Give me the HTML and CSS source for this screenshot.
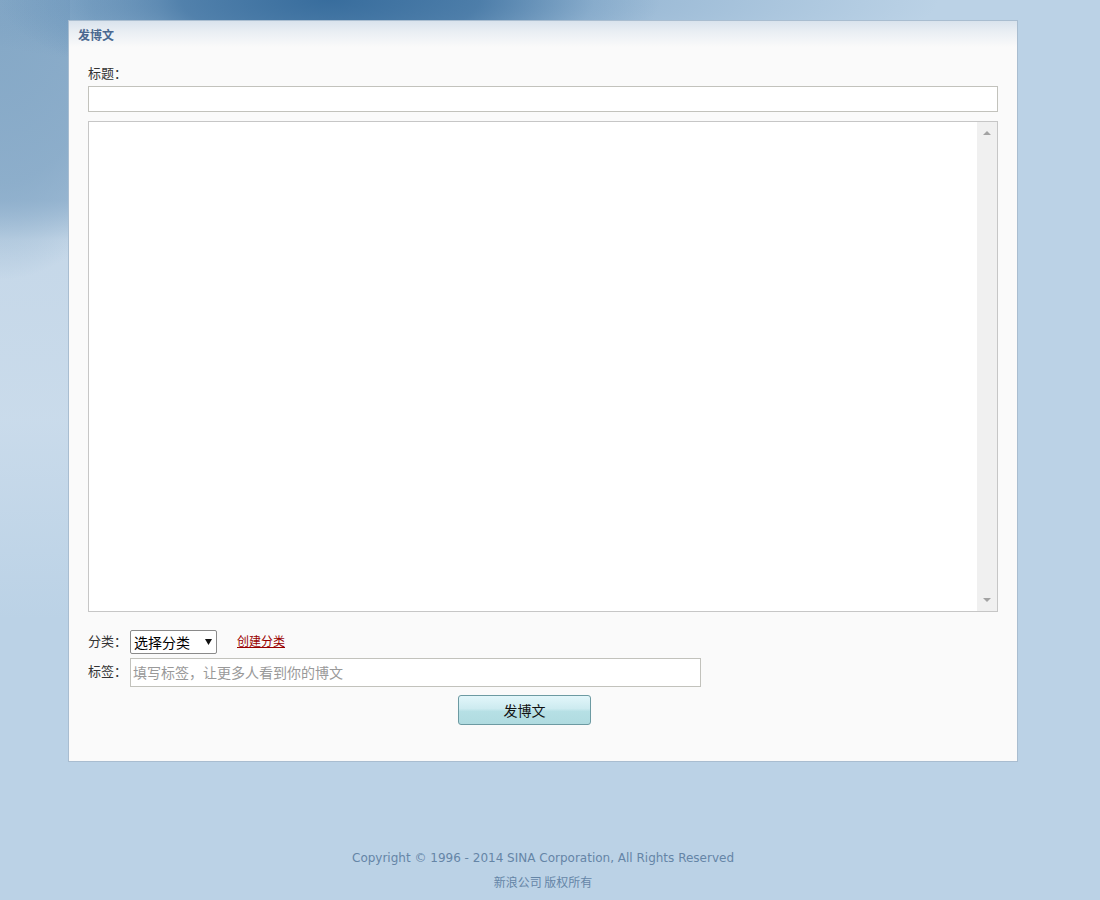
FILE: index.html
```html
<!DOCTYPE html>
<html lang="zh-CN">
<head>
<meta charset="utf-8">
<title>发博文</title>
<link rel="stylesheet" href="styles.css">
</head>
<body>
<div class="page">
  <div class="panel">
    <div class="panel-head">发博文</div>
    <div class="panel-body">
      <div class="label">标题：</div>
      <input class="title-input" type="text">
      <div class="editor">
        <textarea class="editor-area"></textarea>
        <div class="scrollbar">
          <span class="arrow up"></span>
          <span class="arrow down"></span>
        </div>
      </div>
      <div class="row cat-row">
        <span class="row-label">分类：</span>
        <select class="cat-select"><option>选择分类</option></select>
        <a class="create-link" href="#">创建分类</a>
      </div>
      <div class="row tag-row">
        <span class="row-label">标签：</span>
        <input class="tag-input" type="text" placeholder="填写标签，让更多人看到你的博文">
      </div>
      <div class="actions">
        <button class="submit-btn" type="button">发博文</button>
      </div>
    </div>
  </div>
  <div class="footer">
    <div class="copy">Copyright © 1996 - 2014 SINA Corporation, All Rights Reserved</div>
    <div class="copy-cn">新浪公司 版权所有</div>
  </div>
</div>
</body>
</html>
```

FILE: styles.css
```css
html, body {
  margin: 0;
  padding: 0;
  height: 100%;
}

body {
  font-family: "Liberation Sans", "Noto Sans CJK SC", sans-serif;
  color: #333;
  background-color: #bbd2e6;
  background-image:
    radial-gradient(ellipse 330px 95px at 330px 0, #386d9d 0%, rgba(56,109,157,0.75) 45%, rgba(90,138,180,0.25) 80%, rgba(187,210,230,0) 100%),
    radial-gradient(ellipse 520px 80px at 420px 0, rgba(80,130,175,0.5) 0%, rgba(187,210,230,0) 100%),
    radial-gradient(ellipse 160px 240px at 0 40px, #86a9c7 0%, rgba(134,169,199,0.7) 60%, rgba(187,210,230,0) 100%),
    linear-gradient(to bottom, rgba(140,172,202,0.9) 0px, rgba(140,172,202,0.6) 200px, rgba(200,217,233,0.8) 240px, rgba(205,221,236,0.8) 420px, rgba(187,210,230,0) 620px);
  background-repeat: no-repeat;
  background-size: auto, auto, auto, 70px 900px;
}

.page {
  padding-top: 20px;
}

.panel {
  margin-left: 68px;
  width: 950px;
  box-sizing: border-box;
  border: 1px solid #a9bdd0;
  background: #fafafa;
  box-shadow: inset 0 1px 0 #fff;
}

.panel-head {
  height: 26px;
  line-height: 28px;
  padding-left: 9px;
  font-size: 12px;
  font-weight: bold;
  color: #4a6890;
  font-family: "Noto Sans CJK SC", sans-serif;
  background: linear-gradient(to bottom, #d9e3ed 0%, #e9eef3 40%, #fafafa 100%);
}

.panel-body {
  padding: 16px 19px 36px 19px;
}

.label {
  font-family: "Noto Sans CJK SC", sans-serif;
  font-size: 13px;
  line-height: 20px;
  color: #333;
  margin-bottom: 3px;
}

.title-input {
  display: block;
  box-sizing: border-box;
  width: 910px;
  height: 26px;
  margin: 0;
  border: 1px solid #c2c2bc;
  background: #fff;
  outline: none;
}

.editor {
  display: flex;
  box-sizing: border-box;
  width: 910px;
  height: 491px;
  margin-top: 9px;
  border: 1px solid #c6c6c6;
  background: #fff;
}

.editor-area {
  flex: 1;
  border: none;
  margin: 0;
  resize: none;
  outline: none;
  overflow: hidden;
  background: #fff;
}

.scrollbar {
  position: relative;
  width: 20px;
  background: #f0f0f0;
}

.arrow {
  position: absolute;
  left: 6px;
  width: 0;
  height: 0;
  border-left: 4px solid transparent;
  border-right: 4px solid transparent;
}

.arrow.up {
  top: 9px;
  border-bottom: 4px solid #a3a3a3;
}

.arrow.down {
  bottom: 9px;
  border-top: 4px solid #a3a3a3;
}

.row {
  display: flex;
  align-items: center;
}

.row-label {
  width: 42px;
  font-family: "Noto Sans CJK SC", sans-serif;
  font-size: 13px;
  line-height: 18px;
  color: #333;
  margin-top: -3px;
}

.cat-row {
  margin-top: 18px;
  height: 24px;
}

.cat-select {
  appearance: none;
  -webkit-appearance: none;
  box-sizing: border-box;
  width: 87px;
  height: 24px;
  margin: 0;
  padding: 0 0 0 3px;
  border: 1px solid #8a8a8a;
  border-radius: 2px;
  background: #fff url("data:image/svg+xml;utf8,<svg xmlns='http://www.w3.org/2000/svg' width='7' height='6'><path d='M0 0h7L3.5 6z' fill='%23111'/></svg>") no-repeat 74px 8px;
  font-family: "Noto Sans CJK SC", sans-serif;
  font-size: 14px;
  color: #000;
  outline: none;
}

.create-link {
  margin-left: 20px;
  margin-top: -3px;
  font-family: "Noto Sans CJK SC", sans-serif;
  font-size: 12px;
  color: #990000;
  text-decoration: underline;
}

.tag-row {
  margin-top: 4px;
}

.tag-input {
  box-sizing: border-box;
  width: 571px;
  height: 29px;
  margin: 0;
  padding: 0 2px 2px 2px;
  border: 1px solid #c2c2bc;
  background: #fff;
  font-family: "Noto Sans CJK SC", sans-serif;
  font-size: 14px;
  outline: none;
}

.tag-input::placeholder {
  color: #999;
}

.actions {
  margin-top: 8px;
  padding-left: 370px;
}

.submit-btn {
  box-sizing: border-box;
  width: 133px;
  height: 30px;
  margin: 0;
  border: 1px solid #6c9aa2;
  border-radius: 3px;
  background: linear-gradient(to bottom, #e2f6fa 0%, #cdebf0 45%, #b6e0e5 55%, #b0dbe0 100%);
  font-family: "Noto Sans CJK SC", sans-serif;
  font-size: 14px;
  color: #111;
  cursor: pointer;
}

.footer {
  margin-top: 85px;
  margin-left: 68px;
  width: 950px;
  text-align: center;
  color: #6585a6;
}

.copy {
  font-family: "DejaVu Sans", sans-serif;
  font-size: 12px;
  line-height: 23px;
}

.copy-cn {
  font-family: "Noto Sans CJK SC", sans-serif;
  font-size: 12px;
  line-height: 23px;
}
```
